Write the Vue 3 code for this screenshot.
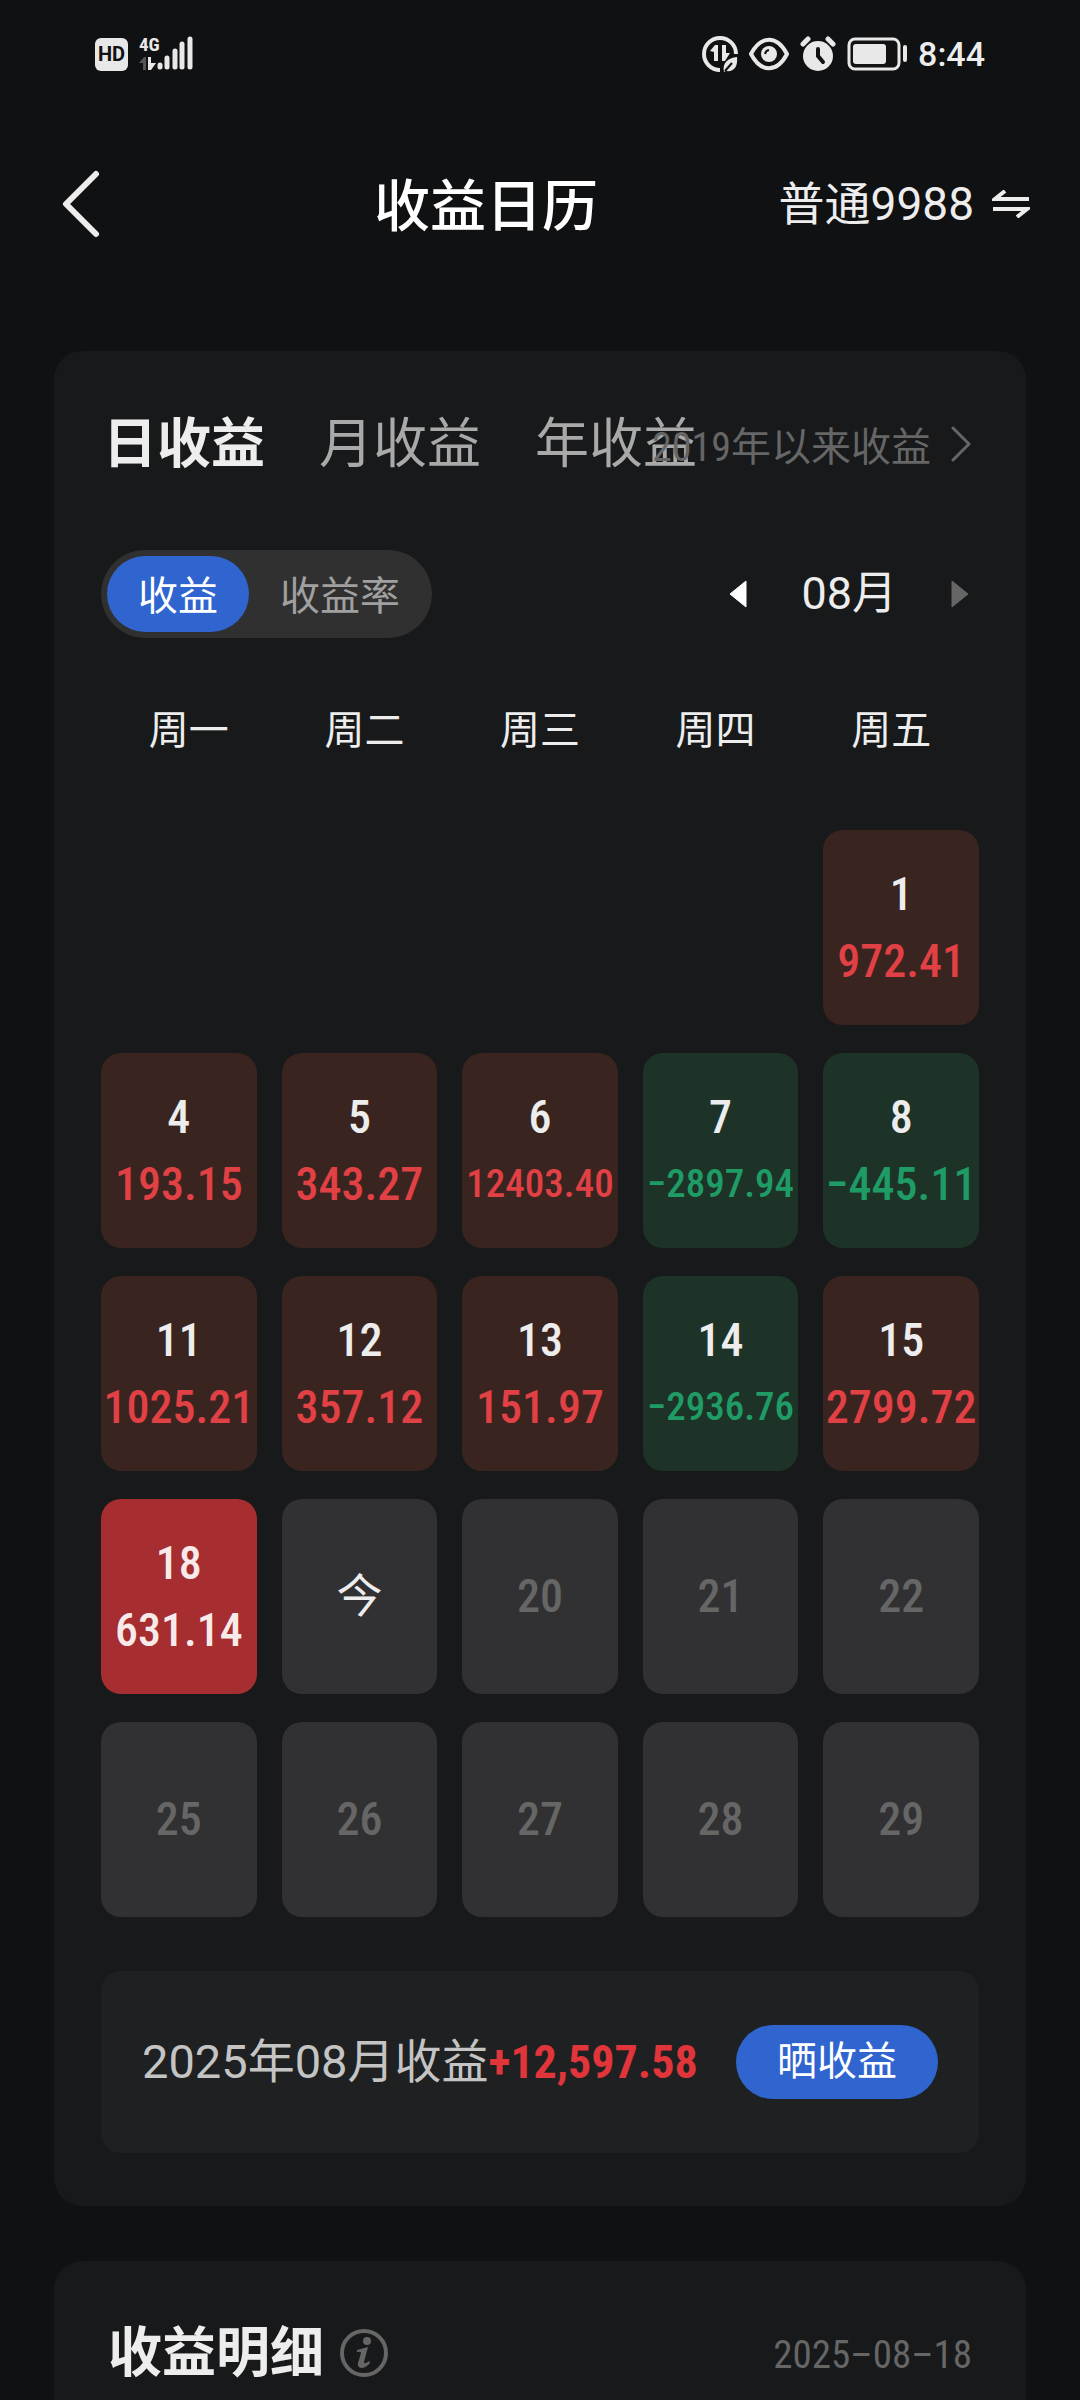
<script setup>
import { ref } from 'vue'

const tabs = ['日收益', '月收益', '年收益']
const activeTab = ref('日收益')
const modes = ['收益', '收益率']
const activeMode = ref('收益')
const weekdays = ['周一', '周二', '周三', '周四', '周五']

const days = [
  { day: '1', value: '972.41', kind: 'gain', first: true },
  { day: '4', value: '193.15', kind: 'gain' },
  { day: '5', value: '343.27', kind: 'gain' },
  { day: '6', value: '12403.40', kind: 'gain' },
  { day: '7', value: '−2897.94', kind: 'loss' },
  { day: '8', value: '−445.11', kind: 'loss' },
  { day: '11', value: '1025.21', kind: 'gain' },
  { day: '12', value: '357.12', kind: 'gain' },
  { day: '13', value: '151.97', kind: 'gain' },
  { day: '14', value: '−2936.76', kind: 'loss' },
  { day: '15', value: '2799.72', kind: 'gain' },
  { day: '18', value: '631.14', kind: 'selected' },
  { day: '今', kind: 'today' },
  { day: '20', kind: 'future' },
  { day: '21', kind: 'future' },
  { day: '22', kind: 'future' },
  { day: '25', kind: 'future' },
  { day: '26', kind: 'future' },
  { day: '27', kind: 'future' },
  { day: '28', kind: 'future' },
  { day: '29', kind: 'future' },
]
</script>

<template>
  <div class="page">
    <div class="status">
      <div class="status-group left">
        <span class="hd">HD</span>
        <svg class="signal" width="54" height="36" viewBox="0 0 54 36" aria-hidden="true">
          <text x="0" y="15" font-size="19" font-weight="700" fill="#e8e8e8">4G</text>
          <path d="M0 27 L5 21 H7 V34 H4 V27 Z" fill="#555" />
          <path d="M9 21 H12 V27 H17 L12 34 H9 Z" fill="#e8e8e8" />
          <g stroke="#e8e8e8" stroke-width="5" stroke-linecap="round">
            <path d="M21 29 V31" />
            <path d="M28 22 V31" />
            <path d="M36 15 V31" />
            <path d="M43 8 V31" />
            <path d="M51 3 V31" />
          </g>
        </svg>
      </div>
      <div class="status-group right">
        <svg width="36" height="36" viewBox="0 0 36 36" aria-hidden="true">
          <path d="M18 34 A16 16 0 1 1 34 18" fill="none" stroke="#e8e8e8" stroke-width="4" />
          <path d="M8 15 L13 9 H16 V25 H12 V16 Z M20 9 H24 V17 H28 L23 25 H20 Z" fill="#e8e8e8" />
          <path d="M35 21 C36 31 32 36 24 35 L22 36 C20 27 26 22 35 21 Z" fill="#e8e8e8" />
          <path d="M23 35 L30 27" stroke="#101113" stroke-width="2" />
        </svg>
        <svg width="40" height="36" viewBox="0 0 40 36" aria-hidden="true">
          <path d="M2 18 C12 -1 28 -1 38 18 C28 37 12 37 2 18 Z" fill="none" stroke="#e8e8e8" stroke-width="4" stroke-linejoin="round" />
          <circle cx="20" cy="18" r="8" fill="#e8e8e8" />
          <path d="M16 18 A5 5 0 0 1 20 14" fill="none" stroke="#101113" stroke-width="2" />
        </svg>
        <svg width="36" height="36" viewBox="0 0 36 36" aria-hidden="true">
          <circle cx="18" cy="20" r="15" fill="#e8e8e8" />
          <path d="M3 8 L8 3 M33 8 L28 3" stroke="#e8e8e8" stroke-width="5" stroke-linecap="round" />
          <path d="M18 13 V20 L23 26" fill="none" stroke="#101113" stroke-width="4" stroke-linecap="round" />
        </svg>
        <svg width="60" height="36" viewBox="0 0 60 36" aria-hidden="true">
          <rect x="2" y="3" width="50" height="30" rx="6" fill="none" stroke="#e8e8e8" stroke-width="3" />
          <rect x="6" y="8" width="33" height="20" rx="3" fill="#e8e8e8" />
          <path d="M58 11 V24" stroke="#e8e8e8" stroke-width="4" stroke-linecap="round" />
        </svg>
        <span class="clock">8:44</span>
      </div>
    </div>

    <header class="header">
      <button class="back" type="button" aria-label="返回">
        <svg width="38" height="68" viewBox="0 0 38 68" aria-hidden="true">
          <path d="M34 4 L4 34 L34 64" fill="none" stroke="#ededed" stroke-width="6" stroke-linecap="round" stroke-linejoin="round" />
        </svg>
      </button>
      <h1 class="title">收益日历</h1>
      <button class="account" type="button">
        <span>普通9988</span>
        <svg width="38" height="28" viewBox="0 0 38 28" aria-hidden="true">
          <path d="M37 9 H3 L13 1 M1 19 H35 L25 27" fill="none" stroke="#ededed" stroke-width="4" />
        </svg>
      </button>
    </header>

    <main class="content">
      <section class="card calendar">
        <div class="tabs-row">
          <nav class="tabs">
            <button
              v-for="t in tabs"
              :key="t"
              type="button"
              class="tab"
              :class="{ active: t === activeTab }"
              @click="activeTab = t"
            >{{ t }}</button>
          </nav>
          <a class="history" href="#">
            <span>2019年以来收益</span>
            <svg width="20" height="36" viewBox="0 0 20 36" aria-hidden="true">
              <path d="M2 2 L18 18 L2 34" fill="none" stroke="#666" stroke-width="3" stroke-linecap="round" stroke-linejoin="round" />
            </svg>
          </a>
        </div>

        <div class="controls">
          <div class="switch">
            <button
              v-for="m in modes"
              :key="m"
              type="button"
              class="mode"
              :class="{ active: m === activeMode }"
              :aria-pressed="m === activeMode"
              @click="activeMode = m"
            >{{ m }}</button>
          </div>
          <div class="month">
            <button class="arrow" type="button" aria-label="上个月">
              <svg width="18" height="28" viewBox="0 0 18 28" aria-hidden="true"><path d="M17 1 V27 L1 14 Z" fill="#fff" stroke="#fff" stroke-linejoin="round" /></svg>
            </button>
            <span>08月</span>
            <button class="arrow" type="button" aria-label="下个月" disabled>
              <svg width="18" height="28" viewBox="0 0 18 28" aria-hidden="true"><path d="M1 1 V27 L17 14 Z" fill="#666" stroke="#666" stroke-linejoin="round" /></svg>
            </button>
          </div>
        </div>

        <div class="weekdays">
          <span v-for="w in weekdays" :key="w">{{ w }}</span>
        </div>

        <div class="grid">
          <button
            v-for="d in days"
            :key="d.day"
            type="button"
            class="cell"
            :class="[d.kind, { first: d.first }]"
          >
            <span class="day">{{ d.day }}</span>
            <span v-if="d.value" class="value" :class="{ long: d.value.length > 7 }">{{ d.value }}</span>
          </button>
        </div>

        <div class="summary">
          <p class="total">2025年08月收益<strong>+12,597.58</strong></p>
          <button class="share" type="button">晒收益</button>
        </div>
      </section>

      <section class="card detail">
        <h2>收益明细</h2>
        <button class="info" type="button" aria-label="说明">
          <svg width="48" height="48" viewBox="0 0 48 48" aria-hidden="true">
            <circle cx="24" cy="24" r="22" fill="none" stroke="#666" stroke-width="4" />
            <circle cx="27" cy="12" r="4" fill="#666" />
            <path d="M17 21 L28 18 L24 33 Q24 36 29 32 L30 34 Q26 39 21 39 Q17 38 18 34 L21 24 Q21 22 17 23 Z" fill="#666" />
          </svg>
        </button>
        <time datetime="2025-08-18">2025–08–18</time>
      </section>
    </main>
  </div>
</template>

<style>
body {
  margin: 0;
  background: #101113;
}
</style>

<style scoped>
.page {
  --num: "Roboto Condensed", Roboto, "Noto Sans CJK SC", sans-serif;
  display: flex;
  flex-direction: column;
  box-sizing: border-box;
  min-height: 100vh;
  background: #101113;
  color: #ededed;
  font-family: Roboto, "Noto Sans CJK SC", sans-serif;
}
button {
  padding: 0;
  border: 0;
  background: none;
  color: inherit;
  font: inherit;
}
svg {
  display: block;
  flex: none;
}
h1, h2, p {
  margin: 0;
}
.status {
  display: flex;
  align-items: center;
  justify-content: space-between;
  height: 108px;
  padding: 0 95px;
}
.status-group {
  display: flex;
  align-items: center;
  gap: 11px;
}
.hd {
  width: 33px;
  border-radius: 6px;
  background: #e8e8e8;
  color: #101113;
  font-size: 20px;
  font-weight: 700;
  line-height: 33px;
  text-align: center;
}
.signal text {
  font-family: var(--num);
}
.clock {
  font-size: 34px;
  font-weight: 500;
  line-height: 40px;
}
.header {
  display: grid;
  grid-template-columns: 312px 1fr auto;
  align-items: center;
  height: 192px;
  padding: 0 50px 0 62px;
}
.title {
  padding-top: 6px;
  font-size: 56px;
  font-weight: 500;
  line-height: 80px;
  color: #fff;
}
.account {
  display: flex;
  align-items: center;
  gap: 18px;
  font-size: 46px;
  line-height: 60px;
}
.content {
  display: flex;
  flex: 1;
  flex-direction: column;
  gap: 55px;
  padding: 51px 54px 0;
}
.card {
  border-radius: 28px;
  background: #17191a;
}
.calendar {
  padding: 51px 47px 53px;
}
.tabs-row {
  position: relative;
  height: 80px;
}
.tabs {
  display: flex;
  gap: 54px;
  padding: 3px 0 0 2px;
}
.tab {
  color: #a9a9a9;
  font-size: 54px;
  line-height: 80px;
  white-space: nowrap;
}
.tab.active {
  color: #ededed;
  font-weight: 700;
}
.history {
  position: absolute;
  top: 0;
  right: 8px;
  display: flex;
  align-items: center;
  gap: 20px;
  height: 84px;
  color: #666;
  font-family: var(--num);
  font-size: 40px;
  text-decoration: none;
}
.controls {
  display: flex;
  align-items: center;
  justify-content: space-between;
  margin-top: 68px;
}
.switch {
  display: flex;
  padding: 6px;
  border-radius: 44px;
  background: #303030;
}
.mode {
  padding: 5px 31px 0;
  border-radius: 38px;
  color: #a0a0a0;
  font-size: 40px;
  line-height: 71px;
}
.mode:last-child {
  padding-right: 26px;
}
.mode.active {
  background: #3065d0;
  color: #fff;
}
.month {
  display: flex;
  align-items: center;
  gap: 54px;
  padding-right: 10px;
  font-size: 45px;
  line-height: 60px;
}
.weekdays {
  display: grid;
  grid-template-columns: repeat(5, 1fr);
  margin-top: 63px;
  font-size: 40px;
  line-height: 60px;
  text-align: center;
}
.grid {
  display: grid;
  grid-template-columns: repeat(5, minmax(0, 1fr));
  grid-auto-rows: 195px;
  gap: 28px 25px;
  margin-top: 69px;
}
.cell {
  display: flex;
  flex-direction: column;
  align-items: center;
  justify-content: center;
  border-radius: 20px;
  background: #313133;
  font-family: var(--num);
  font-size: 46px;
  font-weight: 500;
  white-space: nowrap;
}
.cell.first {
  grid-column: 5;
}
.day,
.value {
  line-height: 67px;
}
.value.long {
  font-size: 39px;
}
.gain {
  background: #3a2420;
}
.gain .value {
  color: #e14045;
}
.loss {
  background: #1e3328;
}
.loss .value {
  color: #1f9c66;
}
.selected {
  background: #a62d30;
  color: #f8eaea;
}
.today {
  font-weight: 400;
}
.future {
  color: #666;
}
.summary {
  display: flex;
  align-items: center;
  justify-content: space-between;
  height: 182px;
  margin-top: 54px;
  padding: 0 41px;
  border-radius: 20px;
  background: #1e2021;
}
.total {
  color: #c4c4c4;
  font-size: 47px;
  line-height: 60px;
  white-space: nowrap;
}
.total strong {
  color: #e0353a;
  font-family: var(--num);
  font-size: 46px;
  font-weight: 700;
}
.share {
  padding: 0 41px;
  border-radius: 37px;
  background: #3065d0;
  color: #fff;
  font-size: 40px;
  line-height: 74px;
  white-space: nowrap;
}
.detail {
  display: flex;
  flex: 1;
  align-items: flex-start;
  padding: 50px 54px 0;
  border-radius: 28px 28px 0 0;
}
.detail h2 {
  padding-top: 3px;
  font-size: 54px;
  font-weight: 700;
  line-height: 80px;
}
.info {
  display: flex;
  align-items: center;
  height: 84px;
  margin-left: 16px;
}
.detail time {
  margin-left: auto;
  color: #666;
  font-family: var(--num);
  font-size: 39px;
  line-height: 88px;
}
</style>
